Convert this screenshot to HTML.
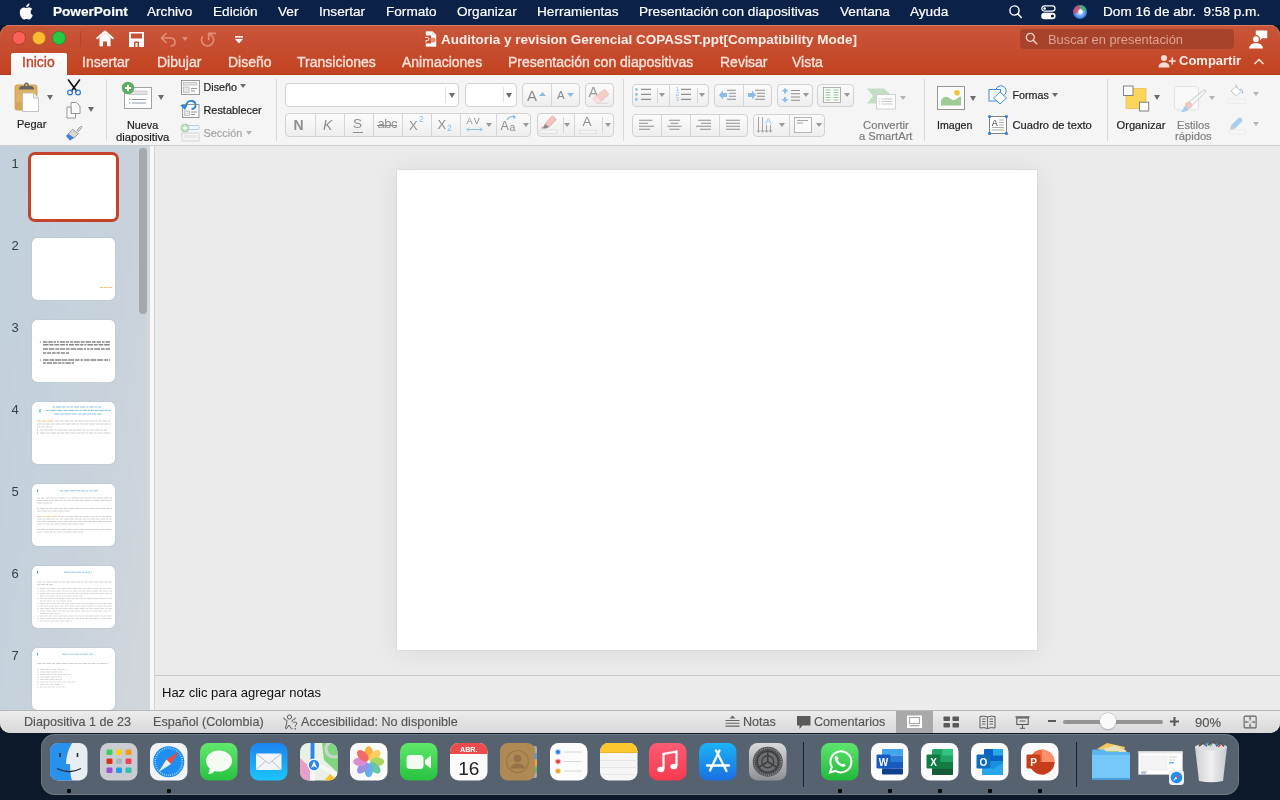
<!DOCTYPE html>
<html><head><meta charset="utf-8">
<style>
*{margin:0;padding:0;box-sizing:border-box}
html,body{width:1280px;height:800px;overflow:hidden;background:#0c192b;font-family:"Liberation Sans",sans-serif}
.a{position:absolute}
svg{position:absolute;overflow:visible}
.t{position:absolute;white-space:nowrap;line-height:1}
.m{color:#fff;font-size:13.6px;top:4.8px;-webkit-text-stroke:.2px #fff}
.tab{color:#f7e1da;font-size:14px;top:55.3px;-webkit-text-stroke:.35px currentColor}
.rl{font-size:11px;color:#1e1e1e;-webkit-text-stroke:.2px currentColor}
.g{color:#9a9a9a}
.sep{position:absolute;width:1px;background:#d9d9d9;top:79px;height:62px}
.dd{position:absolute;width:0;height:0;border-left:3.5px solid transparent;border-right:3.5px solid transparent;border-top:5px solid #6b6b6b}
.ddg{border-top-color:#b5b5b5}
.box{position:absolute;background:linear-gradient(#fbfbfb,#eeeeee);border:1px solid #d2d2d2;border-radius:4px}
.vd{position:absolute;top:0;bottom:0;width:1px;background:#d6d6d6}
.num{position:absolute;left:11.5px;font-size:13px;color:#3a3f47;line-height:1}
.thumb{position:absolute;left:32px;width:83px;height:62px;background:#fff;border-radius:5px;box-shadow:0 0 1px rgba(0,0,0,.3)}
.st{font-size:12.6px;color:#555;top:716px;-webkit-text-stroke:.15px currentColor}
.icon{position:absolute;top:743px;width:38px;height:38px;border-radius:9px;overflow:hidden}
.dot{position:absolute;top:789px;width:4px;height:4px;background:#0a0a0a;border-radius:1px}
#root{position:absolute;left:0;top:0;width:1280px;height:800px;will-change:transform}</style></head><body><div id="root">

<!-- MENU BAR -->
<div class="a" style="left:0;top:0;width:1280px;height:25px;background:#0b2147"></div>
<svg style="left:19px;top:3px" width="14" height="17" viewBox="0 0 14 17"><path fill="#fff" d="M11.6 9c0-2 1.6-2.9 1.700-3-1-1.4-2.400-1.600-2.900-1.600-1.200-.1-2.400.7-3 .7-.6 0-1.600-.7-2.600-.7C3.500 4.500 2.200 5.300 1.500 6.500c-1.400 2.500-.4 6.100 1 8.100.7 1 1.500 2.100 2.500 2 1 0 1.400-.7 2.600-.7s1.500.7 2.600.6c1.100 0 1.700-1 2.400-2 .8-1.100 1.100-2.200 1.100-2.300 0 0-2.100-.8-2.100-3.200zM9.700 3.100c.5-.7.900-1.600.8-2.600-.8 0-1.800.5-2.400 1.200-.5.600-1 1.500-.8 2.500.9.1 1.800-.4 2.400-1.100z"/></svg>
<div class="t m" style="left:53px;font-weight:700">PowerPoint</div>
<div class="t m" style="left:147px">Archivo</div>
<div class="t m" style="left:213px">Edición</div>
<div class="t m" style="left:278px">Ver</div>
<div class="t m" style="left:319px">Insertar</div>
<div class="t m" style="left:386px">Formato</div>
<div class="t m" style="left:457px">Organizar</div>
<div class="t m" style="left:537px">Herramientas</div>
<div class="t m" style="left:639px">Presentación con diapositivas</div>
<div class="t m" style="left:840px">Ventana</div>
<div class="t m" style="left:910px">Ayuda</div>
<div class="t m" style="left:1103px">Dom 16 de abr.&nbsp; 9:58 p.m.</div>

<!-- WINDOW -->
<div class="a" id="winbg" style="left:0;top:25px;width:1280px;height:708px;border-radius:10px;background:#ebebeb;overflow:hidden">
  <div class="a" style="left:0;top:0;width:1280px;height:50px;background:linear-gradient(#c9563a,#c64c2e 50%,#c2431f);border-bottom:1px solid #b93c1c"></div>
  <div class="a" style="left:0;top:0;width:1280px;height:1px;background:#dc7a5e"></div>
  <div class="a" style="left:0;top:50px;width:1280px;height:71px;background:#f5f5f5;border-bottom:1px solid #cdcdcd"></div>
  <div class="a" style="left:0;top:121px;width:150px;height:564px;background:linear-gradient(100deg,#c2d1dd 0%,#c7d2dc 55%,#cdd4db 78%,#d2d7dc 100%)"></div>
  <div class="a" style="left:150px;top:121px;width:5px;height:564px;background:#f8f8f8;border-right:1px solid #d3d3d3"></div>
  <div class="a" style="left:155px;top:650px;width:1125px;height:35px;background:#ececec;border-top:1px solid #cacaca"></div>
  <div class="a" style="left:0;top:685px;width:1280px;height:23px;background:linear-gradient(#ededed,#d8d8d8);border-top:1px solid #b8b8b8"></div>
</div>

<!-- TITLE BAR -->
<div class="a" style="left:12.25px;top:31.25px;width:13.5px;height:13.5px;border-radius:50%;background:#fe5f57;border:.9px solid #a9402f"></div>
<div class="a" style="left:32.25px;top:31.25px;width:13.5px;height:13.5px;border-radius:50%;background:#febc2e;border:.9px solid #b5702a"></div>
<div class="a" style="left:52.25px;top:31.25px;width:13.5px;height:13.5px;border-radius:50%;background:#28c840;border:.9px solid #2f8a35"></div>
<div class="a" style="left:80px;top:31px;width:1px;height:16px;background:#b8452a"></div>
<div class="t" style="left:441px;top:33px;font-size:13.5px;font-weight:700;color:#fbeee9">Auditoria y revision Gerencial COPASST.ppt[Compatibility Mode]</div>
<div class="a" style="left:11px;top:52.5px;width:55.5px;height:22.5px;background:linear-gradient(#ffffff,#f5f5f5);border-radius:2px 2px 0 0"></div>
<div class="t tab" style="left:22px;color:#c0432a">Inicio</div>
<div class="t tab" style="left:82px">Insertar</div>
<div class="t tab" style="left:157px">Dibujar</div>
<div class="t tab" style="left:228px">Diseño</div>
<div class="t tab" style="left:297px">Transiciones</div>
<div class="t tab" style="left:402px">Animaciones</div>
<div class="t tab" style="left:508px">Presentación con diapositivas</div>
<div class="t tab" style="left:720px">Revisar</div>
<div class="t tab" style="left:792px">Vista</div>
<div class="a" style="left:1020px;top:29px;width:214px;height:20px;background:#a8432b;border-radius:4px"></div>
<div class="t" style="left:1048px;top:34px;font-size:12.85px;color:#dfa393">Buscar en presentación</div>
<div class="t" style="left:1179px;top:54px;font-size:13px;font-weight:700;color:#fbeee9">Compartir</div>

<!-- menubar right icons -->
<svg style="left:1008px;top:4px" width="16" height="16" viewBox="0 0 16 16">
  <circle cx="6.5" cy="6.5" r="4.6" fill="none" stroke="#fff" stroke-width="1.4"/>
  <path d="M10 10 L13.3 13.5" stroke="#fff" stroke-width="1.6" stroke-linecap="round"/>
</svg>
<svg style="left:1041px;top:5px" width="15" height="15" viewBox="0 0 15 15">
  <rect x=".8" y=".8" width="13.2" height="5.4" rx="2.7" fill="none" stroke="#fff" stroke-width="1.2"/>
  <circle cx="3.6" cy="3.5" r="1.3" fill="#fff"/>
  <rect x=".2" y="7.8" width="14.4" height="6.4" rx="3.2" fill="#fff"/>
  <circle cx="11.4" cy="11" r="1.6" fill="#0b1f45"/>
</svg>
<svg style="left:1073px;top:5px" width="14" height="14" viewBox="0 0 14 14">
  <defs><radialGradient id="sg" cx="50%" cy="50%" r="50%"><stop offset="0" stop-color="#fff"/><stop offset=".35" stop-color="#9fc8ff"/><stop offset="1" stop-color="#2b6fd0"/></radialGradient></defs>
  <circle cx="7" cy="7" r="7" fill="url(#sg)"/>
  <path d="M7 0 A7 7 0 0 0 0.5 9 L7 7Z" fill="#e0445e" opacity=".8"/>
  <path d="M7 0 A7 7 0 0 1 13.5 5 L7 7Z" fill="#38b36b" opacity=".8"/>
  <circle cx="7.5" cy="6.5" r="2.2" fill="#fff"/>
</svg>

<!-- title bar left icons -->
<svg style="left:96px;top:30px" width="18" height="17" viewBox="0 0 18 17">
  <path d="M1.2 8.2 L9 1.5 L16.8 8.2" fill="none" stroke="#fff" stroke-width="2" stroke-linejoin="round" stroke-linecap="round"/>
  <path d="M3.5 7.5 L3.5 16.2 L7 16.2 L7 11.5 L11 11.5 L11 16.2 L14.5 16.2 L14.5 7.5 L9 3 Z" fill="#fff"/>
</svg>
<svg style="left:128.5px;top:31.5px" width="15" height="15" viewBox="0 0 15 15">
  <path d="M0 0 H15 V15 H0Z M2 1.5 V6.5 H13 V1.5Z M5 15 V10.5 Q5 9.5 6 9.5 H9 Q10 9.5 10 10.5 V15 H8.5 V11 H6.5 V15Z" fill="#fff" fill-rule="evenodd"/>
</svg>
<svg style="left:159.5px;top:31.5px" width="17" height="15" viewBox="0 0 17 15">
  <path d="M6 1.5 L1.5 6 L6 10.5" fill="none" stroke="#e0907a" stroke-width="1.6" stroke-linecap="round" stroke-linejoin="round"/>
  <path d="M2 6 H10 Q15 6 15 10.2 Q15 14 11 14" fill="none" stroke="#e0907a" stroke-width="1.6" stroke-linecap="round"/>
</svg>
<svg style="left:182px;top:37px" width="6" height="4"><path d="M0 0 H6 L3 4Z" fill="#de8d77"/></svg>
<svg style="left:199.5px;top:31.5px" width="17" height="17" viewBox="0 0 17 17">
  <path d="M2.3 4.9 A6 6 0 1 0 12.3 4.2 L9.2 1.6" fill="none" stroke="#e0907a" stroke-width="1.7" stroke-linecap="round" stroke-linejoin="round"/>
  <path d="M8.7 7.4 V1.3 H15" fill="none" stroke="#e0907a" stroke-width="1.7" stroke-linecap="square"/>
</svg>
<svg style="left:235px;top:35.5px" width="8" height="8" viewBox="0 0 8 8">
  <rect x="0" y="0" width="8" height="1.6" fill="#fff"/>
  <path d="M0 3 H8 L4 7.5Z" fill="#fff"/>
</svg>
<!-- doc icon -->
<svg style="left:422px;top:31px" width="15" height="16" viewBox="0 0 15 16">
  <path d="M4 .5 H10.5 L14 4 V15.5 H4Z" fill="#fff" stroke="#d9d9d9" stroke-width=".6"/>
  <path d="M10.5 .5 V4 H14" fill="#eee" stroke="#ccc" stroke-width=".6"/>
  <rect x=".5" y="4.5" width="8.5" height="8" fill="#d04a2a"/>
  <path d="M3 6.5 h2.5 q1.5 0 1.5 1.5 q0 1.5 -1.5 1.5 h-1.5 v2" fill="none" stroke="#fff" stroke-width="1"/>
  <circle cx="11" cy="9" r="2.5" fill="#ec8b6c"/>
</svg>
<!-- search box icon -->
<svg style="left:1025px;top:32px" width="13" height="13" viewBox="0 0 13 13">
  <circle cx="5.3" cy="5.3" r="4" fill="none" stroke="#f3d6cd" stroke-width="1.2"/>
  <path d="M8.2 8.2 L11.8 11.8" stroke="#f3d6cd" stroke-width="1.4" stroke-linecap="round"/>
</svg>
<!-- person chat -->
<svg style="left:1248px;top:29.5px" width="20" height="19" viewBox="0 0 20 19">
  <path d="M7.8 .5 H19.2 V8.2 H14.2 L11.8 10.6 L11.6 8.2 H7.8Z" fill="#fff"/>
  <circle cx="8" cy="9.2" r="3.6" fill="#fff" stroke="#c9512f" stroke-width="1.4"/>
  <path d="M1 18.6 Q1.5 13.2 8 13 Q14.5 13.2 15 18.6Z" fill="#fff"/>
</svg>
<!-- person plus + chevron -->
<svg style="left:1157.5px;top:54px" width="19" height="14" viewBox="0 0 19 14">
  <circle cx="6" cy="4" r="3" fill="#f7dcd3"/>
  <path d="M.5 13.5 Q.5 8.5 6 8.3 Q11.5 8.5 11.5 13.5Z" fill="#f7dcd3"/>
  <path d="M14.3 3.5 V10.5 M10.8 7 H17.8" stroke="#f7dcd3" stroke-width="1.7"/>
</svg>
<svg style="left:1253.5px;top:57.5px" width="10" height="7" viewBox="0 0 10 7">
  <path d="M1 5.5 L5 1.5 L9 5.5" fill="none" stroke="#f7dcd3" stroke-width="1.7" stroke-linecap="round" stroke-linejoin="round"/>
</svg>

<!-- RIBBON -->
<!-- clipboard group -->
<svg style="left:14px;top:81px" width="26" height="32" viewBox="0 0 26 32">
  <rect x="1" y="4" width="22" height="25" rx="2" fill="#e2b062" stroke="#c99846" stroke-width=".8"/>
  <rect x="1.4" y="21" width="21.2" height="7.6" fill="#d6a656"/>
  <path d="M5 8.5 Q5 5 8 5 L10 5 Q10 1.5 12.5 1.5 Q15 1.5 15 5 L17 5 Q20 5 20 8.5 Z" fill="#666"/>
  <circle cx="12.5" cy="4" r="1.2" fill="#e2b062"/>
  <path d="M8.5 12 L19.5 12 L24.5 17 L24.5 30.5 L8.5 30.5 Z" fill="#fff" stroke="#b5b5b5" stroke-width=".8"/>
  <path d="M19.5 12 L19.5 17 L24.5 17" fill="#eee" stroke="#b5b5b5" stroke-width=".8"/>
</svg>
<div class="dd" style="left:47px;top:95px"></div>
<div class="t rl" style="left:17px;top:119px">Pegar</div>
<svg style="left:66px;top:79px" width="16" height="17" viewBox="0 0 16 17">
  <path d="M2.5 1 L10.5 12 M13.5 1 L5.5 12" stroke="#111" stroke-width="1.6" fill="none" stroke-linecap="round"/>
  <circle cx="4" cy="13.5" r="2.4" fill="none" stroke="#2f7fdc" stroke-width="1.3"/>
  <circle cx="12" cy="13.5" r="2.4" fill="none" stroke="#2f7fdc" stroke-width="1.3"/>
</svg>
<svg style="left:66px;top:102px" width="15" height="17" viewBox="0 0 15 17">
  <path d="M5 .5 L10.5 .5 L14 4 L14 11.5 L5 11.5 Z" fill="#fff" stroke="#8a8a8a" stroke-width=".9"/>
  <path d="M1 5 L5 5 L5 11.5 L9.5 11.5 L9.5 16 L1 16 Z" fill="#fff" stroke="#8a8a8a" stroke-width=".9"/>
</svg>
<div class="dd" style="left:88px;top:107px"></div>
<svg style="left:65px;top:125px" width="18" height="16" viewBox="0 0 18 16">
  <path d="M12 5 L15.5 1.5 Q17 1 16.8 2.5 L13.5 6.5 Z" fill="#ddd" stroke="#888" stroke-width=".8"/>
  <path d="M7.5 4.5 L13.5 8.5 L9 13 L3 9 Z" fill="#d9d9d9" stroke="#8a8a8a" stroke-width=".8"/>
  <path d="M3 9 L9 13 L5 15.5 L1 11 Z" fill="#3d7fd6"/>
</svg>
<div class="sep" style="left:106px"></div>

<!-- slides group -->
<svg style="left:120px;top:81px" width="34" height="29" viewBox="0 0 34 29">
  <rect x="4.5" y="6.5" width="27" height="21" fill="#fff" stroke="#9a9a9a" stroke-width=".9"/>
  <rect x="9" y="10" width="18" height="3.5" fill="#e4e4e4" stroke="#b0b0b0" stroke-width=".6"/>
  <path d="M9 18.5h1.5M12 18.5h14M9 22h1.5M12 22h14" stroke="#7d8fa5" stroke-width=".9"/>
  <circle cx="8" cy="7" r="6.2" fill="#5aab5e"/>
  <path d="M8 3.8v6.4M4.8 7h6.4" stroke="#fff" stroke-width="2"/>
</svg>
<div class="dd" style="left:158px;top:95px"></div>
<div class="t rl" style="left:127px;top:119.5px;font-size:10.8px">Nueva</div>
<div class="t rl" style="left:116px;top:131.5px;font-size:11.3px">diapositiva</div>
<svg style="left:181px;top:80px" width="19" height="15" viewBox="0 0 19 15">
  <rect x=".5" y=".5" width="18" height="14" fill="#fafafa" stroke="#8e8e8e" stroke-width=".9"/>
  <rect x="2.5" y="2.5" width="13" height="2.5" fill="#e6e6e6" stroke="#aaa" stroke-width=".6"/>
  <rect x="2.5" y="7" width="5.5" height="5.5" fill="#e6e6e6" stroke="#aaa" stroke-width=".6"/>
  <path d="M10 8.5h6M10 11h4" stroke="#8e8e8e" stroke-width=".9"/>
</svg>
<div class="t rl" style="left:203.5px;top:82px;font-size:10.75px">Diseño</div>
<div class="dd" style="left:240px;top:84px;border-left-width:3px;border-right-width:3px;border-top-width:4px"></div>
<svg style="left:180px;top:100px" width="20" height="18" viewBox="0 0 20 18">
  <rect x="2.5" y="4.5" width="16.5" height="13" fill="#fafafa" stroke="#8e8e8e" stroke-width=".9"/>
  <rect x="4.5" y="11" width="5" height="4.5" fill="#e6e6e6" stroke="#aaa" stroke-width=".6"/>
  <path d="M11 12h6M11 14.5h4" stroke="#8e8e8e" stroke-width=".9"/>
  <path d="M6 6 Q7 .5 12 1 Q16 1.5 15.5 6 Q15 9 11.5 9" fill="none" stroke="#2f86dc" stroke-width="1.8"/>
  <path d="M0 5 L7.5 5 L5 10 Z" fill="#2f86dc"/>
</svg>
<div class="t rl" style="left:203.5px;top:104.5px;font-size:10.9px">Restablecer</div>
<svg style="left:180px;top:123px" width="20" height="19" viewBox="0 0 20 19">
  <rect x="7" y="2.5" width="12" height="4" rx="1" fill="none" stroke="#a9c8ea" stroke-width=".9"/>
  <rect x="2" y="10" width="17" height="8" fill="#f5f5f5" stroke="#d2d2d2" stroke-width=".9"/>
  <rect x="4" y="12" width="13" height="3" fill="#e8e8e8"/>
  <circle cx="5" cy="5" r="4.5" fill="#b6d8b8"/>
  <path d="M5 2.5v5M2.5 5h5" stroke="#fff" stroke-width="1.3"/>
</svg>
<div class="t rl g" style="left:203.5px;top:127.5px;font-size:10.9px;color:#a4a4a4">Sección</div>
<div class="dd ddg" style="left:246px;top:131px;border-left-width:3px;border-right-width:3px;border-top-width:4px"></div>
<div class="sep" style="left:276px"></div>
<!-- font group -->
<div class="box" style="left:285px;top:83px;width:174px;height:24px;background:#fff"><div class="vd" style="left:159px;top:3px;bottom:3px;background:#e2e2e2"></div></div>
<div class="dd" style="left:449px;top:93px"></div>
<div class="box" style="left:464.5px;top:83px;width:52px;height:24px;background:#fff"><div class="vd" style="left:37px;top:3px;bottom:3px;background:#e2e2e2"></div></div>
<div class="dd" style="left:506px;top:93px"></div>
<div class="box" style="left:521.5px;top:83px;width:58px;height:24px"><div class="vd" style="left:28.5px"></div></div>
<div class="t" style="left:527px;top:87.5px;font-size:15px;color:#8c8c8c">A</div>
<svg style="left:539px;top:92px" width="7" height="4"><path d="M0 4 L3.5 0 L7 4Z" fill="#8cbde9"/></svg>
<div class="t" style="left:557px;top:89.5px;font-size:11.5px;color:#8c8c8c">A</div>
<svg style="left:567px;top:92.5px" width="7" height="4"><path d="M0 0 L3.5 4 L7 0Z" fill="#8cbde9"/></svg>
<div class="box" style="left:584.5px;top:83px;width:29px;height:24px"></div>
<div class="t" style="left:588.5px;top:84.5px;font-size:14.5px;color:#9a9a9a">A</div>
<svg style="left:592px;top:88px" width="18" height="17" viewBox="0 0 18 17">
  <path d="M5 15.3 H16.5" stroke="#cfcfcf" stroke-width=".8"/>
  <g transform="rotate(-38 9 8.5)">
    <rect x="1.5" y="5" width="15" height="7" rx="1.2" fill="#f4cdc9" stroke="#e6a5a0" stroke-width=".7" stroke-dasharray="1 .6"/>
    <rect x="1.5" y="5" width="4.5" height="7" rx="1" fill="#f9e0de"/>
  </g>
</svg>

<div class="box" style="left:285px;top:113px;width:246px;height:24px">
  <div class="vd" style="left:29px"></div><div class="vd" style="left:58px"></div><div class="vd" style="left:87px"></div><div class="vd" style="left:116px"></div><div class="vd" style="left:145px"></div><div class="vd" style="left:174px"></div><div class="vd" style="left:210px"></div>
</div>
<div class="t" style="left:293.5px;top:117.5px;font-size:14px;font-weight:700;color:#8e8e8e">N</div>
<div class="t" style="left:323px;top:117.5px;font-size:14px;font-style:italic;color:#8e8e8e">K</div>
<div class="t" style="left:353px;top:117px;font-size:13.5px;color:#8e8e8e">S</div>
<div class="a" style="left:353px;top:132px;width:10px;height:1px;background:#8e8e8e"></div>
<div class="t" style="left:377.5px;top:117px;font-size:13px;color:#8e8e8e;letter-spacing:-.5px">abc</div>
<div class="a" style="left:377px;top:125px;width:20px;height:1px;background:#8e8e8e"></div>
<div class="t" style="left:409px;top:119px;font-size:13px;color:#8e8e8e">X</div>
<div class="t" style="left:419px;top:115px;font-size:8.5px;color:#8cbde9">2</div>
<div class="t" style="left:437.5px;top:117.5px;font-size:13px;color:#8e8e8e">X</div>
<div class="t" style="left:447px;top:124px;font-size:8.5px;color:#8cbde9">2</div>
<div class="t" style="left:466.5px;top:117px;font-size:9px;color:#8e8e8e;letter-spacing:2px">AV</div>
<svg style="left:466px;top:127px" width="17" height="5" viewBox="0 0 17 5"><path d="M1 2.5h15M3 .5L1 2.5 3 4.5M14 .5l2 2-2 2" stroke="#8cbde9" stroke-width="1" fill="none"/></svg>
<div class="dd" style="left:485.5px;top:122.5px;border-left-width:3px;border-right-width:3px;border-top-width:4px;border-top-color:#9a9a9a"></div>
<div class="t" style="left:500.5px;top:119.5px;font-size:12.5px;color:#8e8e8e">A</div>
<div class="t" style="left:509.5px;top:121.5px;font-size:10.5px;color:#8e8e8e">a</div>
<svg style="left:506px;top:115px" width="11" height="6" viewBox="0 0 11 6"><path d="M1 5 Q3 1 8 1.5" stroke="#8cbde9" stroke-width="1.3" fill="none"/><path d="M7 0 L10.5 2 L7 4Z" fill="#8cbde9"/></svg>
<div class="dd" style="left:522.5px;top:122.5px;border-left-width:3px;border-right-width:3px;border-top-width:4px;border-top-color:#9a9a9a"></div>

<div class="box" style="left:536.5px;top:113px;width:77px;height:24px">
  <div class="vd" style="left:36px"></div>
  <div class="vd" style="left:25px;top:3px;bottom:3px"></div>
  <div class="vd" style="left:64px;top:3px;bottom:3px"></div>
</div>
<svg style="left:540px;top:115px" width="17" height="19" viewBox="0 0 17 19"><path d="M5 9 L11.5 1.5 Q12.5 .5 13.5 1.5 L15.5 3.5 Q16.5 4.5 15.5 5.5 L9 12 Z" fill="#f3c3c0" stroke="#e0a3a0" stroke-width=".7"/><path d="M5 9 L9 12 L6 13.5 L2.5 13.5Z" fill="#8a8a8a"/><path d="M1.5 13.5 L3 12" stroke="#f0a090" stroke-width="1.2"/><rect x="0" y="15" width="17" height="3.5" fill="#f5f5f5" stroke="#d6d6d6" stroke-width=".6"/></svg>
<div class="dd" style="left:564px;top:122.5px;border-left-width:3px;border-right-width:3px;border-top-width:4px;border-top-color:#9a9a9a"></div>
<div class="t" style="left:582.5px;top:115.3px;font-size:13.5px;color:#8e8e8e">A</div>
<svg style="left:579px;top:129.5px" width="18" height="4" viewBox="0 0 18 4"><rect x=".3" y=".3" width="17.4" height="3.4" fill="#f5f5f5" stroke="#d6d6d6" stroke-width=".6"/></svg>
<div class="dd" style="left:604.5px;top:122.5px;border-left-width:3px;border-right-width:3px;border-top-width:4px;border-top-color:#9a9a9a"></div>
<div class="sep" style="left:622.5px"></div>
<!-- paragraph group -->
<div class="box" style="left:631.5px;top:83.5px;width:77px;height:23px">
  <div class="vd" style="left:36.5px"></div>
  <div class="vd" style="left:24.5px;top:3px;bottom:3px"></div>
  <div class="vd" style="left:64.5px;top:3px;bottom:3px"></div>
</div>
<svg style="left:634px;top:87px" width="20" height="15" viewBox="0 0 20 15">
  <circle cx="2.4" cy="2.4" r="1.3" fill="#8cbde9"/><circle cx="2.4" cy="7.4" r="1.3" fill="#8cbde9"/><circle cx="2.4" cy="12.4" r="1.3" fill="#8cbde9"/>
  <path d="M7 2.4h10M7 7.4h10M7 12.4h10" stroke="#8e8e8e" stroke-width="1.1"/>
</svg>
<div class="dd" style="left:659px;top:93px;border-left-width:3px;border-right-width:3px;border-top-width:4px;border-top-color:#9a9a9a"></div>
<svg style="left:674px;top:86px" width="7" height="16" viewBox="0 0 7 16"><g font-family="Liberation Sans" font-size="6" fill="#8cbde9" text-anchor="middle"><text x="3.5" y="5.3">1</text><text x="3.5" y="10.3">2</text><text x="3.5" y="15.3">3</text></g></svg>
<svg style="left:680px;top:87px" width="12" height="15" viewBox="0 0 12 15"><path d="M1 2.4h10M1 7.4h10M1 12.4h10" stroke="#8e8e8e" stroke-width="1.1"/></svg>
<div class="dd" style="left:699px;top:93px;border-left-width:3px;border-right-width:3px;border-top-width:4px;border-top-color:#9a9a9a"></div>

<div class="box" style="left:713.5px;top:83.5px;width:58px;height:23px"><div class="vd" style="left:28.5px"></div></div>
<svg style="left:718px;top:89px" width="19" height="12" viewBox="0 0 19 12">
  <path d="M1 6 L5 1.5 L5 4 L9 4 L9 8 L5 8 L5 10.5Z" fill="#8cbde9"/>
  <path d="M9 1.3h9M11 4.3h7M11 7.3h7M9 10.3h9" stroke="#8e8e8e" stroke-width="1.1"/>
</svg>
<svg style="left:747px;top:89px" width="19" height="12" viewBox="0 0 19 12">
  <path d="M9 6 L5 1.5 L5 4 L1 4 L1 8 L5 8 L5 10.5Z" fill="#8cbde9"/>
  <path d="M8 1.3h10M10 4.3h8M10 7.3h8M8 10.3h10" stroke="#8e8e8e" stroke-width="1.1"/>
</svg>

<div class="box" style="left:776.5px;top:83.5px;width:36px;height:23px"></div>
<svg style="left:781px;top:87.5px" width="20" height="15" viewBox="0 0 20 15">
  <path d="M4 0 L7.5 3.5 L5 3.5 L5 5.5 L3 5.5 L3 3.5 L.5 3.5Z" fill="#8cbde9"/>
  <path d="M4 14.5 L7.5 11 L5 11 L5 9 L3 9 L3 11 L.5 11Z" fill="#8cbde9"/>
  
  <path d="M10 2.5h9M10 5.8h9M10 9h9M10 12.2h9" stroke="#8e8e8e" stroke-width="1.1"/>
</svg>
<div class="dd" style="left:803px;top:93px;border-left-width:3px;border-right-width:3px;border-top-width:4px;border-top-color:#9a9a9a"></div>

<div class="box" style="left:817px;top:83.5px;width:36.5px;height:23px"></div>
<svg style="left:823px;top:87px" width="18" height="16" viewBox="0 0 18 16">
  <rect x=".5" y=".5" width="17" height="15" fill="#fafafa" stroke="#a0a0a0" stroke-width=".8"/>
  <path d="M2.5 3h5M10.5 3h5M2.5 5.5h5M10.5 5.5h5M2.5 8h5M10.5 8h5M2.5 10.5h5M10.5 10.5h5M2.5 13h5M10.5 13h5" stroke="#8dc38b" stroke-width=".9"/>
</svg>
<div class="dd" style="left:844px;top:93px;border-left-width:3px;border-right-width:3px;border-top-width:4px;border-top-color:#9a9a9a"></div>

<div class="box" style="left:631.5px;top:113.5px;width:116.5px;height:23px">
  <div class="vd" style="left:28.5px"></div><div class="vd" style="left:57.5px"></div><div class="vd" style="left:86.5px"></div>
</div>
<svg style="left:638px;top:119px" width="104" height="12" viewBox="0 0 104 12">
  <path d="M1 1.3h13.5M1 4.3h9M1 7.3h15M1 10.3h11" stroke="#8e8e8e" stroke-width="1.1"/>
  <path d="M31 1.3h11M32.5 4.3h8M29.5 7.3h14M31.5 10.3h10" stroke="#8e8e8e" stroke-width="1.1"/>
  <path d="M60 1.3h13M63 4.3h10M58 7.3h15M62 10.3h11" stroke="#8e8e8e" stroke-width="1.1"/>
  <path d="M88 1.3h14M88 4.3h14M88 7.3h14M88 10.3h14" stroke="#8e8e8e" stroke-width="1.1"/>
</svg>

<div class="box" style="left:752.5px;top:113.5px;width:72px;height:23px"><div class="vd" style="left:35.5px"></div></div>
<svg style="left:757px;top:116px" width="20" height="18" viewBox="0 0 20 18">
  <path d="M1.5 1v15M5.5 1v15M9.5 9v7M13.5 9v7" stroke="#9a9a9a" stroke-width=".9"/>
  <path d="M0 14.3l1.5 2 1.5-2M4 14.3l1.5 2 1.5-2M8 14.3l1.5 2 1.5-2M12 14.3l1.5 2 1.5-2" stroke="#9a9a9a" stroke-width=".9" fill="none"/>
  <text x="11.5" y="8" text-anchor="middle" font-family="Liberation Sans" font-size="9.5" fill="#8cbde9">A</text>
</svg>
<div class="dd" style="left:778.5px;top:122.5px;border-left-width:3px;border-right-width:3px;border-top-width:4px;border-top-color:#9a9a9a"></div>
<svg style="left:794px;top:117px" width="18" height="16" viewBox="0 0 18 16">
  <rect x=".5" y=".5" width="17" height="15" fill="#fafafa" stroke="#a5a5a5" stroke-width=".8"/>
  <path d="M3 3.5h11M3 6h6" stroke="#9a9a9a" stroke-width=".9"/>
</svg>
<div class="dd" style="left:815.5px;top:122.5px;border-left-width:3px;border-right-width:3px;border-top-width:4px;border-top-color:#9a9a9a"></div>

<svg style="left:866px;top:87.5px" width="31" height="22" viewBox="0 0 31 22">
  <path d="M1 .5 L18 .5 L26 8 L18 15.5 L1 15.5 L7 8Z" fill="#c3dfc3"/>
  <rect x="10.5" y="6.5" width="19" height="14.5" fill="#fdfdfd" stroke="#c8c8c8" stroke-width=".8"/>
  <path d="M13 11h1M15.5 11h11M13 13.5h1M15.5 13.5h11M13 16h1M15.5 16h11" stroke="#bdbdbd" stroke-width=".8"/>
</svg>
<div class="dd ddg" style="left:900px;top:96px;border-left-width:3px;border-right-width:3px;border-top-width:4px"></div>
<div class="t rl" style="left:863px;top:119.5px;font-size:11.3px;color:#7d7d7d">Convertir</div>
<div class="t rl" style="left:859px;top:131px;font-size:11.2px;color:#7d7d7d">a SmartArt</div>
<div class="sep" style="left:923.5px"></div>
<!-- insert group -->
<svg style="left:937px;top:86px" width="28" height="24" viewBox="0 0 28 24">
  <rect x=".5" y=".5" width="27" height="23" fill="#fbfbfb" stroke="#8a8a8a" stroke-width=".9"/>
  <circle cx="20" cy="6.8" r="2.8" fill="#f2c338"/>
  <path d="M4 19.5 L4 14 Q8 8.5 13 12.5 Q17 15.5 19.5 13 Q22 10.5 24 10.5 L24 19.5Z" fill="#9fca93"/>
</svg>
<div class="dd" style="left:969.5px;top:95.5px"></div>
<div class="t rl" style="left:937px;top:119.5px;font-size:10.6px">Imagen</div>
<svg style="left:988px;top:85px" width="21" height="20" viewBox="0 0 21 20">
  <circle cx="13" cy="6" r="5.2" fill="#fff" stroke="#3b8ee0" stroke-width="1"/>
  <rect x="1" y="4.5" width="11.5" height="11.5" fill="#fff" stroke="#3b8ee0" stroke-width="1"/>
  <path d="M12 7 L18.5 13 L12 19 L5.5 13Z" fill="#fff" stroke="#3b8ee0" stroke-width="1"/>
</svg>
<div class="t rl" style="left:1012.5px;top:90px;font-size:10.7px">Formas</div>
<div class="dd" style="left:1052px;top:92.5px;border-left-width:3px;border-right-width:3px;border-top-width:4px"></div>
<svg style="left:987.5px;top:114.5px" width="21" height="20" viewBox="0 0 21 20">
  <rect x="1.5" y="1.5" width="17" height="17" fill="#fff" stroke="#777" stroke-width=".9"/>
  <text x="3.8" y="11" font-family="Liberation Sans" font-size="9" fill="#333">A</text>
  <path d="M11 5h5M11 7.5h5M11 10h5M4 12.5h12M4 15h12" stroke="#9a9a9a" stroke-width=".8"/>
  <circle cx="1.6" cy="1.6" r="1.6" fill="#3b7cd0"/><circle cx="18.4" cy="1.6" r="1.6" fill="#3b7cd0"/>
  <circle cx="1.6" cy="18.4" r="1.6" fill="#3b7cd0"/><circle cx="18.4" cy="18.4" r="1.6" fill="#3b7cd0"/>
</svg>
<div class="t rl" style="left:1012.5px;top:119.5px;font-size:11.15px">Cuadro de texto</div>
<div class="sep" style="left:1106.5px"></div>

<!-- drawing group -->
<svg style="left:1122px;top:84.5px" width="28" height="27" viewBox="0 0 28 27">
  <rect x="4" y="3.5" width="20" height="20" fill="#fcd55a" stroke="#e0b53a" stroke-width=".6"/>
  <rect x="1.5" y="1" width="9.5" height="9.5" fill="#fff" stroke="#777" stroke-width=".9"/>
  <rect x="17.5" y="17.2" width="9.2" height="8.8" fill="#fff" stroke="#777" stroke-width=".9"/>
</svg>
<div class="dd" style="left:1154px;top:95px"></div>
<div class="t rl" style="left:1116.5px;top:119.5px;font-size:11.15px;color:#222">Organizar</div>
<svg style="left:1173px;top:85px" width="35" height="28" viewBox="0 0 35 28">
  <rect x="1.5" y="1.5" width="24" height="23.5" rx="3" fill="#f9f9f9" stroke="#dedede" stroke-width=".9"/>
  <path d="M31 5 Q33.5 4.5 32.5 7 L18 21.5 L14.5 18 Z" fill="#f7f7f7" stroke="#c2c2c2" stroke-width=".9"/>
  <circle cx="15.5" cy="20.3" r="3.6" fill="#f0c6be"/>
  <path d="M12.5 21 Q16 24 15 25.5 Q11 27.5 8 27 Q10 25 11 22Z" fill="#a9cdee"/>
</svg>
<div class="dd ddg" style="left:1208.5px;top:95.5px;border-left-width:3px;border-right-width:3px;border-top-width:4px"></div>
<div class="t rl" style="left:1177px;top:119.5px;font-size:11.1px;color:#7f7f7f">Estilos</div>
<div class="t rl" style="left:1175px;top:131px;font-size:11.2px;color:#7f7f7f">rápidos</div>
<svg style="left:1228px;top:84px" width="18" height="20" viewBox="0 0 18 20">
  <path d="M3 7 L8 2.5 L13 7.5 L8.5 12 Z" fill="#fff" stroke="#b8b8b8" stroke-width=".8"/>
  <path d="M7 .5 Q9 0 9 4" stroke="#b8b8b8" stroke-width=".8" fill="none"/>
  <path d="M12 5 Q15 6 14.5 9.5" stroke="#9fc6ee" stroke-width="1.3" fill="none"/>
  <rect x=".3" y="15.3" width="17.4" height="4" rx=".8" fill="#f7f7f7" stroke="#e0e0e0" stroke-width=".6"/>
</svg>
<div class="dd ddg" style="left:1252.5px;top:92px;border-left-width:3px;border-right-width:3px;border-top-width:4px"></div>
<svg style="left:1228px;top:115.5px" width="18" height="18" viewBox="0 0 18 18">
  <path d="M3 9.5 L10.5 2 Q12 1 13 2 L14 3 Q15 4 14 5.5 L6.5 13 Z" fill="#a9cdee"/>
  <path d="M3 9.5 L6.5 13 L2 14Z" fill="#c9c9c9"/>
  <rect x=".3" y="14" width="17.4" height="3.7" rx=".8" fill="#f7f7f7" stroke="#e0e0e0" stroke-width=".6"/>
</svg>
<div class="dd ddg" style="left:1252.5px;top:122px;border-left-width:3px;border-right-width:3px;border-top-width:4px"></div>


<!-- THUMBNAILS -->
<!-- scrollbar -->
<div class="a" style="left:147px;top:146px;width:3px;height:564px;background:#d3d6da"></div>
<div class="a" style="left:139px;top:148px;width:8px;height:166px;border-radius:4px;background:#a5a8ad"></div>
<div class="num" style="top:156.5px">1</div>
<div class="num" style="top:238.5px">2</div>
<div class="num" style="top:320.5px">3</div>
<div class="num" style="top:402.5px">4</div>
<div class="num" style="top:484.5px">5</div>
<div class="num" style="top:566.5px">6</div>
<div class="num" style="top:648.5px">7</div>
<div class="a" style="left:28px;top:152px;width:91px;height:70px;border-radius:7px;border:3px solid #c3442a;background:#fff"></div>
<div class="thumb" style="top:238px"><svg style="left:0;top:0" width="83" height="62" viewBox="0 0 83 62"><path d="M68.0 49.5H71.0M71.9 49.5H76.0M76.9 49.5H80.4" stroke="#f0a840" stroke-width="0.8" opacity="0.9"/></svg></div>
<div class="thumb" style="top:320px"><svg style="left:0;top:0" width="83" height="62" viewBox="0 0 83 62"><circle cx="8.3" cy="21.9" r=".5" fill="#333"/><path d="M11.0 21.9H15.4M16.3 21.9H20.8M21.7 21.9H24.0M24.9 21.9H26.9M27.8 21.9H33.2M34.1 21.9H37.1M38.0 21.9H41.0M41.9 21.9H47.8M48.7 21.9H52.6M53.5 21.9H58.9M59.8 21.9H63.7M64.6 21.9H69.1M70.0 21.9H72.6M73.5 21.9H78.0" stroke="#111" stroke-width="1.5" opacity="0.5"/><path d="M11.0 24.75H16.5M17.4 24.75H21.5M22.4 24.75H27.3M28.2 24.75H32.9M33.8 24.75H36.1M37.0 24.75H42.0M42.9 24.75H47.3M48.2 24.75H51.4M52.3 24.75H54.4M55.3 24.75H60.8M61.7 24.75H65.6M66.5 24.75H71.3M72.2 24.75H77.7" stroke="#111" stroke-width="1.5" opacity="0.5"/><path d="M11.0 29H15.9M16.8 29H22.4M23.3 29H26.9M27.8 29H33.0M33.9 29H37.7M38.6 29H44.3M45.2 29H50.8M51.7 29H54.1M55.0 29H57.5M58.4 29H61.3M62.2 29H68.0M68.9 29H72.7M73.6 29H78.0" stroke="#111" stroke-width="1.5" opacity="0.5"/><path d="M11.0 33H14.2M15.1 33H19.1M20.0 33H23.6M24.5 33H27.9M28.8 33H33.1M34.0 33H37.0" stroke="#111" stroke-width="1.5" opacity="0.5"/><circle cx="8.3" cy="40" r=".5" fill="#333"/><path d="M11.0 40H16.6M17.5 40H22.2M23.1 40H28.9M29.8 40H35.2M36.1 40H42.1M43.0 40H47.6M48.5 40H51.2M52.1 40H57.5M58.4 40H64.3M65.2 40H70.8M71.7 40H76.0M76.9 40H78.0" stroke="#111" stroke-width="1.5" opacity="0.5"/><path d="M11.0 43H13.8M14.7 43H20.1M21.0 43H25.3M26.2 43H29.3M30.2 43H32.5M33.4 43H38.8M39.7 43H42.0" stroke="#111" stroke-width="1.5" opacity="0.5"/></svg></div>
<div class="thumb" style="top:402px"><svg style="left:0;top:0" width="83" height="62" viewBox="0 0 83 62"><path d="M8 7v3.5" stroke="#2aa6b8" stroke-width="1"/><path d="M20.5 5H22.9M23.8 5H29.0M29.9 5H33.5M34.4 5H37.0M37.9 5H41.1M42.0 5H47.1M48.0 5H53.4M54.3 5H56.5M57.4 5H61.9M62.8 5H65.0M65.9 5H69.0" stroke="#3b9bd8" stroke-width="0.75" opacity="0.8"/><path d="M14.0 8.5H17.3M18.2 8.5H23.7M24.6 8.5H30.6M31.5 8.5H35.5M36.4 8.5H42.4M43.3 8.5H46.5M47.4 8.5H49.7M50.6 8.5H55.0M55.9 8.5H58.1M59.0 8.5H61.7M62.6 8.5H66.3M67.2 8.5H71.6M72.5 8.5H75.1M76.0 8.5H78.2" stroke="#3b9bd8" stroke-width="0.75" opacity="0.8"/><path d="M22.0 12H27.5M28.4 12H31.6M32.5 12H38.4M39.3 12H44.8M45.7 12H49.3M50.2 12H54.0M54.9 12H59.0M59.9 12H64.5M65.4 12H69.7" stroke="#3b9bd8" stroke-width="0.75" opacity="0.8"/><path d="M5.0 19H9.2M10.1 19H14.6M15.5 19H21.3" stroke="#f0a040" stroke-width="0.75" opacity="0.85"/><path d="M23.0 19H27.0M27.9 19H31.7M32.6 19H37.4M38.3 19H41.3M42.2 19H45.4M46.3 19H52.2M53.1 19H57.2M58.1 19H62.3M63.2 19H65.2M66.1 19H69.8M70.7 19H75.0M75.9 19H78.0M78.9 19H79.0" stroke="#333" stroke-width="0.55" opacity="0.45"/><path d="M5.0 22H9.5M10.4 22H12.7M13.6 22H18.1M19.0 22H22.8M23.7 22H28.5M29.4 22H32.8M33.7 22H38.5M39.4 22H44.4M45.3 22H47.3M48.2 22H50.5M51.4 22H56.1M57.0 22H62.8M63.7 22H66.7M67.6 22H71.5M72.4 22H76.7M77.6 22H79.0" stroke="#333" stroke-width="0.55" opacity="0.45"/><path d="M5.0 25H8.5M9.4 25H12.6M13.5 25H17.0M17.9 25H20.0" stroke="#333" stroke-width="0.55" opacity="0.45"/><circle cx="5.5" cy="28" r=".4" fill="#333"/><path d="M8.0 28H11.2M12.1 28H15.6M16.5 28H21.6M22.5 28H24.6M25.5 28H29.8M30.7 28H35.6M36.5 28H39.8M40.7 28H43.6M44.5 28H49.7M50.6 28H53.5M54.4 28H57.2M58.1 28H61.8M62.7 28H67.5M68.4 28H70.8M71.7 28H75.0M75.9 28H76.0" stroke="#333" stroke-width="0.55" opacity="0.45"/><circle cx="5.5" cy="31" r=".4" fill="#333"/><path d="M8.0 31H13.3M14.2 31H18.0M18.9 31H24.3M25.2 31H27.9M28.8 31H32.1M33.0 31H37.6M38.5 31H44.1M45.0 31H48.8M49.7 31H52.6M53.5 31H56.0M56.9 31H61.0M61.9 31H64.6M65.5 31H70.8M71.7 31H77.0M77.9 31H79.0" stroke="#333" stroke-width="0.55" opacity="0.45"/></svg></div>
<div class="thumb" style="top:484px"><svg style="left:0;top:0" width="83" height="62" viewBox="0 0 83 62"><path d="M5.5 5.5v2.5" stroke="#3b9bd8" stroke-width="1"/><path d="M28.0 6.8H31.1M32.0 6.8H37.2M38.1 6.8H42.7M43.6 6.8H48.8M49.7 6.8H53.1M54.0 6.8H56.5M57.4 6.8H60.6M61.5 6.8H66.0" stroke="#3b9bd8" stroke-width="0.7" opacity="0.8"/><path d="M5.0 14H8.1M9.0 14H12.4M13.3 14H16.9M17.8 14H21.5M22.4 14H26.1M27.0 14H32.6M33.5 14H36.2M37.1 14H39.1M40.0 14H45.8M46.7 14H52.2M53.1 14H59.0M59.9 14H63.7M64.6 14H70.4M71.3 14H77.0M77.9 14H80.0" stroke="#333" stroke-width="0.5" opacity="0.45"/><path d="M5.0 16.5H10.0M10.9 16.5H16.2M17.1 16.5H21.8M22.7 16.5H26.8M27.7 16.5H30.8M31.7 16.5H35.1M36.0 16.5H38.9M39.8 16.5H42.1M43.0 16.5H47.3M48.2 16.5H51.4M52.3 16.5H57.5M58.4 16.5H60.6M61.5 16.5H67.1M68.0 16.5H72.8M73.7 16.5H79.4" stroke="#333" stroke-width="0.5" opacity="0.45"/><path d="M5.0 19H10.6M11.5 19H17.1M18.0 19H20.0" stroke="#333" stroke-width="0.5" opacity="0.45"/><path d="M5.0 24.5H7.1M8.0 24.5H12.9M13.8 24.5H16.5M17.4 24.5H20.6M21.5 24.5H26.2M27.1 24.5H31.2M32.1 24.5H35.7M36.6 24.5H42.4M43.3 24.5H47.7M48.6 24.5H52.0M52.9 24.5H55.9M56.8 24.5H62.3M63.2 24.5H67.1M68.0 24.5H73.1M74.0 24.5H77.4M78.3 24.5H80.0" stroke="#333" stroke-width="0.5" opacity="0.45"/><path d="M5.0 27H9.1M10.0 27H15.3M16.2 27H18.9M19.8 27H25.0M25.9 27H31.5M32.4 27H37.7" stroke="#333" stroke-width="0.5" opacity="0.45"/><path d="M5.0 32.5H10.3M11.2 32.5H13.2M14.1 32.5H18.6M19.5 32.5H25.0" stroke="#f0a040" stroke-width="0.6" opacity="0.85"/><path d="M26.0 32.5H28.2M29.1 32.5H32.2M33.1 32.5H36.2M37.1 32.5H41.2M42.1 32.5H45.8M46.7 32.5H50.6M51.5 32.5H56.6M57.5 32.5H59.5M60.4 32.5H62.6M63.5 32.5H66.0M66.9 32.5H69.4M70.3 32.5H72.6M73.5 32.5H79.4" stroke="#333" stroke-width="0.5" opacity="0.45"/><path d="M5.0 35H10.4M11.3 35H13.7M14.6 35H18.6M19.5 35H22.7M23.6 35H26.9M27.8 35H31.2M32.1 35H36.7M37.6 35H41.9M42.8 35H46.3M47.2 35H49.9M50.8 35H54.2M55.1 35H57.5M58.4 35H62.7M63.6 35H68.4M69.3 35H72.9M73.8 35H76.1M77.0 35H79.7" stroke="#333" stroke-width="0.5" opacity="0.45"/><path d="M5.0 37.5H8.5M9.4 37.5H13.8M14.7 37.5H19.8M20.7 37.5H24.3M25.2 37.5H30.4M31.3 37.5H35.8M36.7 37.5H40.4M41.3 37.5H44.8M45.7 37.5H49.7M50.6 37.5H55.4M56.3 37.5H60.0M60.9 37.5H65.6M66.5 37.5H70.4M71.3 37.5H74.3M75.2 37.5H79.3" stroke="#333" stroke-width="0.5" opacity="0.45"/><path d="M5.0 40H9.8M10.7 40H13.0M13.9 40H17.6M18.5 40H22.2M23.1 40H28.6M29.5 40H35.2M36.1 40H39.6M40.5 40H46.1M47.0 40H52.0" stroke="#333" stroke-width="0.5" opacity="0.45"/><path d="M5.0 45.5H8.0M8.9 45.5H12.8M13.7 45.5H16.2M17.1 45.5H22.4M23.3 45.5H27.9M28.8 45.5H34.3M35.2 45.5H40.4M41.3 45.5H46.0M46.9 45.5H51.8M52.7 45.5H57.0M57.9 45.5H60.3M61.2 45.5H65.5M66.4 45.5H68.5M69.4 45.5H71.9M72.8 45.5H77.9M78.8 45.5H80.0" stroke="#333" stroke-width="0.5" opacity="0.45"/><path d="M5.0 48H7.4M8.3 48H10.7M11.6 48H17.1M18.0 48H20.7M21.6 48H23.7M24.6 48H30.0M30.9 48H33.3M34.2 48H39.6M40.5 48H45.2M46.1 48H51.5" stroke="#333" stroke-width="0.5" opacity="0.45"/></svg></div>
<div class="thumb" style="top:566px"><svg style="left:0;top:0" width="83" height="62" viewBox="0 0 83 62"><path d="M5.5 5v2.5" stroke="#3b9bd8" stroke-width="1"/><path d="M32.0 6.2H37.8M38.7 6.2H43.0M43.9 6.2H49.1M50.0 6.2H52.2M53.1 6.2H58.1M59.0 6.2H60.0" stroke="#3b9bd8" stroke-width="0.7" opacity="0.8"/><path d="M5.0 16H9.9M10.8 16H13.2M14.1 16H19.1M20.0 16H25.7M26.6 16H28.9M29.8 16H33.1M34.0 16H38.2M39.1 16H44.4M45.3 16H48.3M49.2 16H51.9M52.8 16H55.8M56.7 16H61.2M62.1 16H67.1M68.0 16H71.6M72.5 16H75.9M76.8 16H80.0" stroke="#333" stroke-width="0.5" opacity="0.45"/><path d="M5.0 18.5H8.4M9.3 18.5H13.0M13.9 18.5H16.2M17.1 18.5H21.1" stroke="#333" stroke-width="0.5" opacity="0.45"/><circle cx="6" cy="22.5" r=".35" fill="#333"/><path d="M8.0 22.5H13.9M14.8 22.5H18.4M19.3 22.5H24.3M25.2 22.5H27.9M28.8 22.5H33.5M34.4 22.5H39.5M40.4 22.5H45.1M46.0 22.5H50.0M50.9 22.5H54.9M55.8 22.5H60.3M61.2 22.5H66.8M67.7 22.5H70.3M71.2 22.5H73.6M74.5 22.5H79.5" stroke="#333" stroke-width="0.45" opacity="0.42"/><circle cx="6" cy="25" r=".35" fill="#333"/><path d="M8.0 25H13.7M14.6 25H18.6M19.5 25H23.3M24.2 25H29.1M30.0 25H32.7M33.6 25H36.7M37.6 25H40.4M41.3 25H45.6M46.5 25H49.8M50.7 25H53.6M54.5 25H59.3M60.2 25H66.0M66.9 25H70.1M71.0 25H75.8M76.7 25H80.0" stroke="#333" stroke-width="0.45" opacity="0.42"/><circle cx="6" cy="27.5" r=".35" fill="#333"/><path d="M8.0 27.5H13.4M14.3 27.5H18.7M19.6 27.5H22.6M23.5 27.5H26.4M27.3 27.5H29.4M30.3 27.5H34.2M35.1 27.5H38.6M39.5 27.5H42.2M43.1 27.5H46.6M47.5 27.5H50.8M51.7 27.5H56.7M57.6 27.5H60.2M61.1 27.5H67.1M68.0 27.5H71.9M72.8 27.5H77.2M78.1 27.5H80.0" stroke="#333" stroke-width="0.45" opacity="0.42"/><path d="M8.0 30H12.2M13.1 30H17.1M18.0 30H22.8M23.7 30H29.2M30.1 30H33.7M34.6 30H39.5M40.4 30H46.2M47.1 30H50.0" stroke="#333" stroke-width="0.45" opacity="0.42"/><circle cx="6" cy="32.5" r=".35" fill="#333"/><path d="M8.0 32.5H10.9M11.8 32.5H14.8M15.7 32.5H20.5M21.4 32.5H26.1M27.0 32.5H32.9M33.8 32.5H39.2M40.1 32.5H43.0M43.9 32.5H46.7M47.6 32.5H50.6M51.5 32.5H54.3M55.2 32.5H60.0M60.9 32.5H66.3M67.2 32.5H72.8M73.7 32.5H76.8M77.7 32.5H80.0" stroke="#333" stroke-width="0.45" opacity="0.42"/><path d="M8.0 35H10.7M11.6 35H14.0M14.9 35H20.1M21.0 35H23.5M24.4 35H27.4M28.3 35H34.0M34.9 35H37.0M37.9 35H40.0" stroke="#333" stroke-width="0.45" opacity="0.42"/><circle cx="6" cy="37.5" r=".35" fill="#333"/><path d="M8.0 37.5H12.9M13.8 37.5H17.2M18.1 37.5H20.2M21.1 37.5H24.4M25.3 37.5H28.8M29.7 37.5H32.1M33.0 37.5H37.5M38.4 37.5H43.4M44.3 37.5H48.3M49.2 37.5H51.7M52.6 37.5H55.8M56.7 37.5H62.3M63.2 37.5H65.5M66.4 37.5H70.1M71.0 37.5H74.8M75.7 37.5H79.8" stroke="#333" stroke-width="0.45" opacity="0.42"/><circle cx="6" cy="40" r=".35" fill="#333"/><path d="M8.0 40H11.0M11.9 40H16.0M16.9 40H21.7M22.6 40H27.3M28.2 40H31.7M32.6 40H36.4M37.3 40H42.0M42.9 40H47.5M48.4 40H54.2M55.1 40H60.4M61.3 40H63.7M64.6 40H70.4M71.3 40H74.6M75.5 40H79.8" stroke="#333" stroke-width="0.45" opacity="0.42"/><circle cx="6" cy="42.5" r=".35" fill="#333"/><path d="M8.0 42.5H12.1M13.0 42.5H17.7M18.6 42.5H22.6M23.5 42.5H25.7M26.6 42.5H29.8M30.7 42.5H35.6M36.5 42.5H41.5M42.4 42.5H47.0M47.9 42.5H52.8M53.7 42.5H56.3M57.2 42.5H60.7M61.6 42.5H67.3M68.2 42.5H72.0M72.9 42.5H75.3M76.2 42.5H80.0" stroke="#333" stroke-width="0.45" opacity="0.42"/><circle cx="6" cy="45" r=".35" fill="#333"/><path d="M8.0 45H13.7M14.6 45H19.2M20.1 45H24.7M25.6 45H29.2M30.1 45H33.3M34.2 45H37.0M37.9 45H41.8M42.7 45H47.9M48.8 45H53.6M54.5 45H56.9M57.8 45H60.5M61.4 45H65.6M66.5 45H70.8M71.7 45H75.3M76.2 45H78.6M79.5 45H80.0" stroke="#333" stroke-width="0.45" opacity="0.42"/><path d="M8.0 47.5H13.5M14.4 47.5H16.6M17.5 47.5H21.5M22.4 47.5H25.4M26.3 47.5H28.0" stroke="#333" stroke-width="0.45" opacity="0.42"/><circle cx="6" cy="50" r=".35" fill="#333"/><path d="M8.0 50H11.4M12.3 50H15.6M16.5 50H20.2M21.1 50H25.2M26.1 50H31.2M32.1 50H35.5M36.4 50H41.8M42.7 50H45.2M46.1 50H49.1M50.0 50H52.4M53.3 50H55.8M56.7 50H61.8M62.7 50H67.6M68.5 50H71.3M72.2 50H74.9M75.8 50H79.5" stroke="#333" stroke-width="0.45" opacity="0.42"/><circle cx="6" cy="52.5" r=".35" fill="#333"/><path d="M8.0 52.5H13.0M13.9 52.5H19.1M20.0 52.5H25.0M25.9 52.5H30.3M31.2 52.5H33.8M34.7 52.5H38.3M39.2 52.5H42.0M42.9 52.5H47.0M47.9 52.5H52.1M53.0 52.5H55.8M56.7 52.5H59.7M60.6 52.5H65.8M66.7 52.5H68.8M69.7 52.5H74.9M75.8 52.5H80.0" stroke="#333" stroke-width="0.45" opacity="0.42"/><circle cx="6" cy="55" r=".35" fill="#333"/><path d="M8.0 55H11.3M12.2 55H17.8M18.7 55H21.9M22.8 55H26.8M27.7 55H31.8M32.7 55H37.6M38.5 55H40.0" stroke="#333" stroke-width="0.45" opacity="0.42"/></svg></div>
<div class="thumb" style="top:648px"><svg style="left:0;top:0" width="83" height="62" viewBox="0 0 83 62"><path d="M5.5 5v2.5" stroke="#3b9bd8" stroke-width="1"/><path d="M30.0 6.2H34.7M35.6 6.2H37.7M38.6 6.2H41.4M42.3 6.2H46.8M47.7 6.2H50.1M51.0 6.2H56.0M56.9 6.2H59.9M60.8 6.2H62.0" stroke="#3b9bd8" stroke-width="0.7" opacity="0.8"/><path d="M5.0 15.5H9.5M10.4 15.5H13.2M14.1 15.5H19.2M20.1 15.5H23.0M23.9 15.5H29.1M30.0 15.5H35.7M36.6 15.5H42.4M43.3 15.5H45.8M46.7 15.5H49.8M50.7 15.5H55.3M56.2 15.5H58.8M59.7 15.5H63.6M64.5 15.5H66.9M67.8 15.5H73.5M74.4 15.5H76.0" stroke="#333" stroke-width="0.5" opacity="0.45"/><circle cx="6" cy="21.5" r=".35" fill="#333"/><path d="M8.0 21.5H12.0M12.9 21.5H16.9M17.8 21.5H19.9M20.8 21.5H24.2M25.1 21.5H28.4M29.3 21.5H32.6M33.5 21.5H34.0" stroke="#333" stroke-width="0.45" opacity="0.42"/><circle cx="6" cy="24" r=".35" fill="#333"/><path d="M8.0 24H13.4M14.3 24H18.7M19.6 24H25.3M26.2 24H30.0" stroke="#333" stroke-width="0.45" opacity="0.42"/><circle cx="6" cy="26.5" r=".35" fill="#333"/><path d="M8.0 26.5H14.0M14.9 26.5H17.7M18.6 26.5H20.9M21.8 26.5H24.6M25.5 26.5H30.3M31.2 26.5H34.0M34.9 26.5H38.0" stroke="#333" stroke-width="0.45" opacity="0.42"/><circle cx="6" cy="29" r=".35" fill="#333"/><path d="M8.0 29H11.6M12.5 29H17.9M18.8 29H23.6M24.5 29H28.1M29.0 29H30.0" stroke="#333" stroke-width="0.45" opacity="0.42"/><circle cx="6" cy="31.5" r=".35" fill="#333"/><path d="M8.0 31.5H12.1M13.0 31.5H16.7M17.6 31.5H22.2M23.1 31.5H26.4M27.3 31.5H30.0" stroke="#333" stroke-width="0.45" opacity="0.42"/><circle cx="6" cy="34" r=".35" fill="#333"/><path d="M8.0 34H11.8M12.7 34H16.5M17.4 34H19.5M20.4 34H23.5M24.4 34H29.7M30.6 34H34.4M35.3 34H38.8M39.7 34H43.3" stroke="#333" stroke-width="0.45" opacity="0.42"/><circle cx="6" cy="36.5" r=".35" fill="#333"/><path d="M8.0 36.5H13.2M14.1 36.5H17.2M18.1 36.5H21.5M22.4 36.5H27.9M28.8 36.5H30.0" stroke="#333" stroke-width="0.45" opacity="0.42"/><circle cx="6" cy="39" r=".35" fill="#333"/><path d="M8.0 39H10.8M11.7 39H14.4M15.3 39H18.9M19.8 39H22.5M23.4 39H25.5M26.4 39H28.9M29.8 39H32.4M33.3 39H34.0" stroke="#333" stroke-width="0.45" opacity="0.42"/></svg></div>

<!-- SLIDE -->
<div class="a" style="left:397px;top:170px;width:640px;height:480px;background:#fff;box-shadow:0 0 0 .6px rgba(0,0,0,.07),0 1px 24px rgba(0,0,0,.075)"></div>
<div class="t" style="left:162px;top:686px;font-size:13px;color:#111">Haz clic para agregar notas</div>

<!-- STATUS -->
<div class="t st" style="left:24px">Diapositiva 1 de 23</div>
<div class="t st" style="left:153px">Español (Colombia)</div>
<div class="t st" style="left:301px">Accesibilidad: No disponible</div>
<div class="t st" style="left:743px">Notas</div>
<div class="t st" style="left:814px">Comentarios</div>
<div class="a" style="left:896px;top:711px;width:37px;height:22px;background:#a9a9a9"></div>
<div class="t st" style="left:1195px;font-size:13px">90%</div>
<svg style="left:282.5px;top:713.5px" width="16" height="16" viewBox="0 0 16 16">
  <g fill="none" stroke="#555" stroke-width=".95" stroke-linejoin="round">
    <circle cx="6.5" cy="3" r="2.1"/>
    <path d="M1 3.5 Q.2 5 2 5.5 L4 6.5 L3.5 10 L2.5 14 Q2.5 15 3.5 14.8 L6 11 L8.5 14.8 Q9.2 15 9.2 14"/>
    <path d="M12 3.5 Q12.8 5 11 5.5 L9 6.5 L9.2 8"/>
    <path d="M10.2 9.3 Q11 7.5 12.8 8 Q14.5 8.8 13.2 10.7 Q12.2 11.5 12.2 12.8"/>
  </g>
  <circle cx="12.2" cy="14.8" r=".8" fill="#555"/>
</svg>
<svg style="left:725px;top:715px" width="15" height="13" viewBox="0 0 15 13">
  <path d="M4.5 3.5 L7.5 .5 L10.5 3.5Z" fill="#666"/>
  <path d="M.5 5.5h14M.5 8.3h14M.5 11.1h14" stroke="#666" stroke-width="1.1"/>
</svg>
<svg style="left:796.5px;top:715.5px" width="14" height="14" viewBox="0 0 14 14">
  <path d="M0 0 H13.5 V9.5 H5.5 L2.5 13 V9.5 H0Z" fill="#5a5a5a"/>
</svg>
<svg style="left:906px;top:715px" width="17" height="14" viewBox="0 0 17 14">
  <rect x="1" y=".5" width="15" height="12.5" fill="#fff"/>
  <rect x="3.5" y="2.5" width="10" height="6" fill="none" stroke="#a9a9a9" stroke-width="1.2"/>
  <rect x="3.5" y="10" width="10" height="1.3" fill="#a9a9a9"/>
</svg>
<svg style="left:942.5px;top:716px" width="17" height="12" viewBox="0 0 17 12">
  <rect x=".5" y=".5" width="6.5" height="4.5" rx=".8" fill="#5a5a5a"/><rect x="9.5" y=".5" width="6.5" height="4.5" rx=".8" fill="#5a5a5a"/>
  <rect x=".5" y="7" width="6.5" height="4.5" rx=".8" fill="#5a5a5a"/><rect x="9.5" y="7" width="6.5" height="4.5" rx=".8" fill="#5a5a5a"/>
</svg>
<svg style="left:978.5px;top:714.5px" width="17" height="15" viewBox="0 0 17 15">
  <path d="M1 1.5 Q5 .5 8.5 2 Q12 .5 16 1.5 V13 Q12 12 8.5 13.5 Q5 12 1 13Z" fill="none" stroke="#5a5a5a" stroke-width="1"/>
  <path d="M8.5 2v11.5M3 4h3.5M3 6.5h3.5M3 9h3.5M10.5 4h3.5M10.5 6.5h3.5M10.5 9h3.5" stroke="#5a5a5a" stroke-width=".9"/>
</svg>
<svg style="left:1015px;top:715.5px" width="15" height="13" viewBox="0 0 15 13">
  <path d="M.5 1h14" stroke="#5a5a5a" stroke-width="1.4"/>
  <rect x="1.8" y="2" width="11.4" height="6.5" fill="none" stroke="#5a5a5a" stroke-width="1.1"/>
  <path d="M4.5 5h6M7.5 8.5V12M5 12.3h5" stroke="#5a5a5a" stroke-width="1"/>
</svg>
<div class="a" style="left:1047.5px;top:720px;width:8.5px;height:2.2px;background:#5a5a5a"></div>
<div class="a" style="left:1063px;top:720px;width:100px;height:4px;border-radius:2px;background:#939393"></div>
<div class="a" style="left:1099.5px;top:713px;width:16px;height:16px;border-radius:50%;background:#fafafa;box-shadow:0 0 0 .5px #b5b5b5,0 1px 1.5px rgba(0,0,0,.25)"></div>
<svg style="left:1169.5px;top:717px" width="9" height="9" viewBox="0 0 9 9"><path d="M4.5 0v9M0 4.5h9" stroke="#5a5a5a" stroke-width="2.1"/></svg>
<svg style="left:1242.5px;top:714.5px" width="14" height="14" viewBox="0 0 14 14">
  <rect x="1.1" y="1.1" width="12" height="11.8" rx="1" fill="none" stroke="#5f5f5f" stroke-width="1.1"/>
  <path d="M7.1 5.6V2.2M7.1 8.4v3.4M5.7 7H2.2M8.5 7H12" stroke="#5f5f5f" stroke-width=".9"/>
  <path d="M5.9 3.6 L7.1 2.1 L8.3 3.6Z M5.9 10.4 L7.1 11.9 L8.3 10.4Z M3.6 5.8 L2.1 7 L3.6 8.2Z M10.6 5.8 L12.1 7 L10.6 8.2Z" fill="#5f5f5f"/>
</svg>


<!-- DOCK -->
<div class="a" style="left:41px;top:734px;width:1198px;height:61px;background:rgba(92,102,116,.95);border-radius:14px;box-shadow:inset 0 0 0 1px rgba(140,150,160,.45)"></div>
<!-- Finder -->
<svg style="left:50px;top:743px" width="38" height="38" viewBox="0 0 38 38">
  <defs><clipPath id="c1"><rect width="37.5" height="37.5" rx="8.5"/></clipPath></defs>
  <g clip-path="url(#c1)">
    <rect width="38" height="38" fill="#e9eef2"/>
    <path d="M0 0 H22 Q16 10 16 21 H20 Q19.5 30 22 38 H0Z" fill="#2b9af0"/>
    <path d="M0 0 H22 Q16 10 16 21 H20 Q19.5 30 22 38 H0Z" fill="#1f7fe0" opacity=".3"/>
    <path d="M7 25.5 Q19 32 31 25.5" fill="none" stroke="#2a2f3a" stroke-width="1.3"/>
    <path d="M10 10v4M27.5 10v4" stroke="#2a2f3a" stroke-width="1.6"/>
  </g>
</svg>
<!-- Launchpad -->
<svg style="left:100px;top:743px" width="38" height="38" viewBox="0 0 38 38">
  <rect width="37.5" height="37.5" rx="8.5" fill="#c9ccd1"/>
  <rect x="6.5" y="6.5" width="6" height="5.5" rx="1.3" fill="#3bd05a"/><rect x="16" y="6.5" width="6" height="5.5" rx="1.3" fill="#ffcc1e"/><rect x="25.5" y="6.5" width="6" height="5.5" rx="1.3" fill="#f59a1d"/>
  <rect x="6.5" y="15.5" width="6" height="5.5" rx="1.3" fill="#d8321f"/><rect x="16" y="15.5" width="6" height="5.5" rx="1.3" fill="#aeb4bb"/><rect x="25.5" y="15.5" width="6" height="5.5" rx="1.3" fill="#f24058"/>
  <rect x="6.5" y="24.5" width="6" height="5.5" rx="1.3" fill="#9b4fd6"/><rect x="16" y="24.5" width="6" height="5.5" rx="1.3" fill="#1f9cf2"/><rect x="25.5" y="24.5" width="6" height="5.5" rx="1.3" fill="#32c0b0"/>
</svg>
<!-- Safari -->
<svg style="left:150px;top:743px" width="38" height="38" viewBox="0 0 38 38">
  <rect width="37.5" height="37.5" rx="8.5" fill="#f2f3f5"/>
  <circle cx="18.75" cy="18.75" r="15.5" fill="#1e8ff0"/>
  <circle cx="18.75" cy="18.75" r="13.5" fill="none" stroke="#fff" stroke-width="1.6" stroke-dasharray=".6 1.5" opacity=".85"/>
  <path d="M29 8.5 L21 21 L16.5 16.5Z" fill="#f04a3a"/>
  <path d="M8.5 29 L16.5 16.5 L21 21Z" fill="#f2f2f2"/>
</svg>
<!-- Messages -->
<svg style="left:200px;top:743px" width="38" height="38" viewBox="0 0 38 38">
  <defs><linearGradient id="gm" x1="0" y1="0" x2="0" y2="1"><stop offset="0" stop-color="#62e86e"/><stop offset="1" stop-color="#27c23f"/></linearGradient></defs>
  <rect width="37.5" height="37.5" rx="8.5" fill="url(#gm)"/>
  <ellipse cx="19" cy="18" rx="13" ry="10.5" fill="#f4fbf3"/>
  <path d="M9.5 24 Q10 30 7.5 31 Q13 31 15 27.5Z" fill="#f4fbf3"/>
</svg>
<!-- Mail -->
<svg style="left:250px;top:743px" width="38" height="38" viewBox="0 0 38 38">
  <defs><linearGradient id="gml" x1="0" y1="0" x2="0" y2="1"><stop offset="0" stop-color="#1b84f0"/><stop offset="1" stop-color="#1bc5fa"/></linearGradient></defs>
  <rect width="37.5" height="37.5" rx="8.5" fill="url(#gml)"/>
  <rect x="6" y="10.5" width="25.5" height="16.5" rx="1.2" fill="#f2f4f7"/>
  <path d="M6.5 11 L18.75 20.5 L31 11M6.5 26.5 L15 18.5M31 26.5 L22.5 18.5" fill="none" stroke="#a9b3c0" stroke-width=".8"/>
</svg>
<!-- Maps -->
<svg style="left:300px;top:743px" width="38" height="38" viewBox="0 0 38 38">
  <defs><clipPath id="c2"><rect width="37.5" height="37.5" rx="8.5"/></clipPath></defs>
  <g clip-path="url(#c2)">
    <rect width="38" height="38" fill="#e9f0e6"/>
    <path d="M22 0 H38 V30 L24 17Z" fill="#7fd67e"/>
    <circle cx="34" cy="6" r="8" fill="none" stroke="#d0d5d2" stroke-width="3"/>
    <path d="M0 15 L10 24 V38 H0Z" fill="#e7a0c9"/>
    <path d="M24 38 L30 31 L38 38Z" fill="#f8c22a"/>
    <path d="M10 0 h5 v38 h-5Z" fill="#f6f6f6"/>
    <path d="M10.5 0 h4 v18 h-4Z" fill="#2a87ea"/>
    <path d="M14 22 L38 35 V30 L15 18Z" fill="#f6f6f6"/>
    <circle cx="14" cy="22" r="6.5" fill="#fff"/>
    <circle cx="14" cy="22" r="5.2" fill="#2a87ea"/>
    <path d="M14 18 L17 25 L14 23.3 L11 25Z" fill="#fff"/>
  </g>
</svg>
<!-- Photos -->
<svg style="left:350px;top:743px" width="38" height="38" viewBox="0 0 38 38">
  <rect width="37.5" height="37.5" rx="8.5" fill="#fafafa"/>
  <g transform="translate(18.75 18.75)" opacity=".85">
    <ellipse cx="0" cy="-8.5" rx="4.2" ry="7" fill="#f5a623"/>
    <ellipse cx="0" cy="-8.5" rx="4.2" ry="7" fill="#f7c843" transform="rotate(45)"/>
    <ellipse cx="0" cy="-8.5" rx="4.2" ry="7" fill="#9dcf43" transform="rotate(90)"/>
    <ellipse cx="0" cy="-8.5" rx="4.2" ry="7" fill="#4fbf8f" transform="rotate(135)"/>
    <ellipse cx="0" cy="-8.5" rx="4.2" ry="7" fill="#4da3e8" transform="rotate(180)"/>
    <ellipse cx="0" cy="-8.5" rx="4.2" ry="7" fill="#8c7fe0" transform="rotate(225)"/>
    <ellipse cx="0" cy="-8.5" rx="4.2" ry="7" fill="#d77bcc" transform="rotate(270)"/>
    <ellipse cx="0" cy="-8.5" rx="4.2" ry="7" fill="#f0524c" transform="rotate(315)"/>
  </g>
</svg>
<!-- FaceTime -->
<svg style="left:400px;top:743px" width="38" height="38" viewBox="0 0 38 38">
  <defs><linearGradient id="gf" x1="0" y1="0" x2="0" y2="1"><stop offset="0" stop-color="#5ee86a"/><stop offset="1" stop-color="#27c23f"/></linearGradient></defs>
  <rect width="37.5" height="37.5" rx="8.5" fill="url(#gf)"/>
  <rect x="6.5" y="12" width="17" height="14" rx="3.5" fill="#f3faf2"/>
  <path d="M25 17 L31 12.5 V25.5 L25 21Z" fill="#f3faf2"/>
</svg>
<!-- Calendar -->
<svg style="left:450px;top:743px" width="38" height="38" viewBox="0 0 38 38">
  <defs><clipPath id="c3"><rect width="37.5" height="37.5" rx="8.5"/></clipPath></defs>
  <g clip-path="url(#c3)">
    <rect width="38" height="38" fill="#fbfbfb"/>
    <rect width="38" height="11" fill="#f04b4b"/>
  </g>
  <text x="18.75" y="8.8" text-anchor="middle" font-family="Liberation Sans" font-weight="700" font-size="7.2" fill="#fff">ABR.</text>
  <text x="18.75" y="32" text-anchor="middle" font-family="Liberation Sans" font-size="19" fill="#222">16</text>
</svg>
<!-- Contacts -->
<svg style="left:500px;top:743px" width="38" height="38" viewBox="0 0 38 38">
  <rect x="32" y="3" width="5" height="32" rx="2" fill="#aaa"/>
  <rect x="34" y="10" width="3" height="6" fill="#4aa0e8"/><rect x="34" y="17" width="3" height="6" fill="#f2a22e"/><rect x="34" y="24" width="3" height="6" fill="#55c060"/>
  <rect width="35" height="37.5" rx="8" fill="#b08a55"/>
  <circle cx="17.5" cy="18.5" r="11" fill="none" stroke="#9c7748" stroke-width="1.2"/>
  <circle cx="17.5" cy="15.5" r="3.8" fill="#97714a"/>
  <path d="M10.5 25.5 Q11 20.5 17.5 20.5 Q24 20.5 24.5 25.5" fill="#97714a"/>
</svg>
<!-- Reminders -->
<svg style="left:550px;top:743px" width="38" height="38" viewBox="0 0 38 38">
  <rect width="37.5" height="37.5" rx="8.5" fill="#fcfcfc"/>
  <circle cx="8" cy="9" r="2.6" fill="#2f7ff0" stroke="#c7dcf8" stroke-width="1"/>
  <circle cx="8" cy="18.5" r="2.6" fill="#e8443a" stroke="#f5c5c0" stroke-width="1"/>
  <circle cx="8" cy="28" r="2.6" fill="#f2a02a" stroke="#f8dcb5" stroke-width="1"/>
  <path d="M14 9h18M14 18.5h18M14 28h18" stroke="#d4d4d4" stroke-width=".9"/>
</svg>
<!-- Notes -->
<svg style="left:600px;top:743px" width="38" height="38" viewBox="0 0 38 38">
  <defs><clipPath id="c4"><rect width="37.5" height="37.5" rx="8.5"/></clipPath></defs>
  <g clip-path="url(#c4)">
    <rect width="38" height="38" fill="#f6f6f6"/>
    <rect width="38" height="9" fill="#fbc82d"/>
    <path d="M0 9.5h38" stroke="#e7b42a" stroke-width="1"/>
    <path d="M0 17.5h38M0 24.5h38M0 31.5h38" stroke="#dedede" stroke-width=".6"/>
  </g>
</svg>
<!-- Music -->
<svg style="left:648.5px;top:743px" width="38" height="38" viewBox="0 0 38 38">
  <defs><linearGradient id="gmu" x1="0" y1="0" x2="0" y2="1"><stop offset="0" stop-color="#fb5c74"/><stop offset="1" stop-color="#f83a4e"/></linearGradient></defs>
  <rect width="37.5" height="37.5" rx="8.5" fill="url(#gmu)"/>
  <path d="M14.5 26 V11 L27.5 8.5 V23" fill="none" stroke="#fff" stroke-width="2.2"/>
  <ellipse cx="11.8" cy="26.5" rx="3.5" ry="2.8" fill="#fff"/>
  <ellipse cx="24.8" cy="23.5" rx="3.5" ry="2.8" fill="#fff"/>
</svg>
<!-- App Store -->
<svg style="left:698.5px;top:743px" width="38" height="38" viewBox="0 0 38 38">
  <defs><linearGradient id="ga" x1="0" y1="0" x2="0" y2="1"><stop offset="0" stop-color="#1ab4f6"/><stop offset="1" stop-color="#1a6fe0"/></linearGradient></defs>
  <rect width="37.5" height="37.5" rx="8.5" fill="url(#ga)"/>
  <path d="M20.5 7.5 L11 27.5M17 7.5 L27.5 28M8 22.5 H30" stroke="#fff" stroke-width="2.3" stroke-linecap="round"/>
</svg>
<!-- Settings -->
<svg style="left:748.5px;top:743px" width="38" height="38" viewBox="0 0 38 38">
  <defs><linearGradient id="gs" x1="0" y1="0" x2="0" y2="1"><stop offset="0" stop-color="#d9dadc"/><stop offset="1" stop-color="#8e9095"/></linearGradient></defs>
  <rect width="37.5" height="37.5" rx="8.5" fill="url(#gs)"/>
  <circle cx="18.75" cy="18.75" r="15" fill="#505256"/>
  <circle cx="18.75" cy="18.75" r="13.5" fill="none" stroke="#8a8c90" stroke-width="1.5" stroke-dasharray="1 1.2"/>
  <circle cx="18.75" cy="18.75" r="10.5" fill="#6d6f73" stroke="#3d3f42" stroke-width="1.4"/>
  <circle cx="18.75" cy="18.75" r="6" fill="none" stroke="#3d3f42" stroke-width="1.3"/>
  <path d="M18.75 18.75 V8.5M18.75 18.75 L27.5 24M18.75 18.75 L10 24" stroke="#3d3f42" stroke-width="1.5"/>
</svg>
<div class="a" style="left:803px;top:742px;width:1px;height:45px;background:#13223a"></div>
<!-- WhatsApp -->
<svg style="left:821px;top:743px" width="38" height="38" viewBox="0 0 38 38">
  <defs><linearGradient id="gw" x1="0" y1="0" x2="0" y2="1"><stop offset="0" stop-color="#5fe46f"/><stop offset="1" stop-color="#22b83a"/></linearGradient></defs>
  <rect width="37.5" height="37.5" rx="8.5" fill="url(#gw)"/>
  <path d="M9 29.5 L10.8 24 A10.5 10.5 0 1 1 14.5 27.8Z" fill="none" stroke="#fff" stroke-width="2"/>
  <path d="M14.5 12.5 Q13 14 14 17 Q16 21.5 20.5 23.5 Q23.5 24.5 24.8 22.5 L23 20.5 L21 21.2 Q18 20 16.8 17 L17.8 15 Z" fill="#fff"/>
</svg>
<!-- Word -->
<svg style="left:871px;top:743px" width="38" height="38" viewBox="0 0 38 38">
  <rect width="37.5" height="37.5" rx="8.5" fill="#fcfcfc"/>
  <rect x="11" y="6" width="21" height="6.5" rx="1" fill="#41a5ee"/>
  <rect x="11" y="12.5" width="21" height="6.5" fill="#2b7cd3"/>
  <rect x="11" y="19" width="21" height="6.5" fill="#185abd"/>
  <rect x="11" y="25.5" width="21" height="6" rx="1" fill="#103f91"/>
  <rect x="5.5" y="11.5" width="14" height="14" rx="1.3" fill="#185abd"/>
  <text x="12.5" y="22.5" text-anchor="middle" font-family="Liberation Sans" font-weight="700" font-size="10" fill="#fff">W</text>
</svg>
<!-- Excel -->
<svg style="left:921px;top:743px" width="38" height="38" viewBox="0 0 38 38">
  <rect width="37.5" height="37.5" rx="8.5" fill="#fcfcfc"/>
  <rect x="11" y="6" width="21" height="26" rx="1.5" fill="#21a366"/>
  <rect x="21.5" y="6" width="10.5" height="6.5" fill="#33c481"/>
  <rect x="11" y="19" width="21" height="6.5" fill="#107c41"/>
  <rect x="11" y="25.5" width="21" height="6.5" rx="1" fill="#185c37"/>
  <rect x="5.5" y="11.5" width="14" height="14" rx="1.3" fill="#107c41"/>
  <text x="12.5" y="22.5" text-anchor="middle" font-family="Liberation Sans" font-weight="700" font-size="10" fill="#fff">X</text>
</svg>
<!-- Outlook -->
<svg style="left:971px;top:743px" width="38" height="38" viewBox="0 0 38 38">
  <rect width="37.5" height="37.5" rx="8.5" fill="#fcfcfc"/>
  <rect x="13" y="6" width="19" height="13" rx="1" fill="#0a64c8"/>
  <rect x="22" y="6" width="10" height="6.5" fill="#28a8ea"/>
  <path d="M11 18 L32 18 V31 Q32 32 31 32 H12 Q11 32 11 31Z" fill="#1490df"/>
  <path d="M11 20 L21.5 26 L32 20 V32 H11Z" fill="#28a8ea"/>
  <rect x="5.5" y="11.5" width="14" height="14" rx="1.3" fill="#0f6cbd"/>
  <text x="12.5" y="22.5" text-anchor="middle" font-family="Liberation Sans" font-weight="700" font-size="10" fill="#fff">O</text>
</svg>
<!-- PowerPoint -->
<svg style="left:1021px;top:743px" width="38" height="38" viewBox="0 0 38 38">
  <rect width="37.5" height="37.5" rx="8.5" fill="#fcfcfc"/>
  <circle cx="21" cy="19" r="12.5" fill="#ed6c47"/>
  <path d="M21 6.5 A12.5 12.5 0 0 1 33.5 19 H21Z" fill="#ff8f6b"/>
  <path d="M8.5 19 A12.5 12.5 0 0 0 33.5 19Z" fill="#c43e1c"/>
  <rect x="5.5" y="11.5" width="14" height="14" rx="1.3" fill="#c43e1c"/>
  <text x="12.5" y="22.5" text-anchor="middle" font-family="Liberation Sans" font-weight="700" font-size="10" fill="#fff">P</text>
</svg>
<div class="a" style="left:1075.5px;top:742px;width:1px;height:45px;background:#13223a"></div>
<!-- Folder -->
<svg style="left:1091px;top:741px" width="40" height="42" viewBox="0 0 40 42">
  <path d="M6 8 L16 2 L34 6 L32 14Z" fill="#f0c95a"/>
  <path d="M9 9 L24 4 L36 10 L30 14Z" fill="#e9dfb8"/>
  <path d="M12 10 h16 v6 h-16z" fill="#8fd08a"/>
  <path d="M1 10 Q1 8.5 2.5 8.5 H13 L15.5 11 H37.5 Q39 11 39 12.5 V37 Q39 39 37 39 H3 Q1 39 1 37Z" fill="#5bb5ee"/>
  <path d="M1 14 H39 V37 Q39 39 37 39 H3 Q1 39 1 37Z" fill="#75c8f7"/>
  <path d="M1 38 H39" stroke="#3d93d0" stroke-width="1.5"/>
</svg>
<!-- Safari window preview -->
<svg style="left:1138px;top:751px" width="46" height="34" viewBox="0 0 46 34">
  <rect x=".5" y=".5" width="44" height="23" fill="#fff" stroke="#ccc" stroke-width=".6"/>
  <rect x=".5" y=".5" width="44" height="2" fill="#e8e8e8"/>
  <rect x="3" y="5" width="26" height="14" fill="#f4f4f4" stroke="#e0e0e0" stroke-width=".4"/>
  <path d="M31 6h8M31 9h6" stroke="#999" stroke-width=".5"/><rect x="31" y="11" width="5" height="1.5" fill="#7aa8e0"/>
  <path d="M3 20.5h6" stroke="#999" stroke-width=".5"/><rect x="3" y="21.5" width="5" height="1" fill="#5a8ad0"/>
  <rect x="31" y="19" width="15" height="15" rx="3.5" fill="#f0f0f0"/>
  <circle cx="38.5" cy="26.5" r="5.8" fill="#1e8ff0"/>
  <path d="M42 23 L39.3 27.3 L37.7 25.7Z" fill="#f04a3a"/><path d="M35 30 L37.7 25.7 L39.3 27.3Z" fill="#fff"/>
</svg>
<!-- Trash -->
<svg style="left:1193px;top:740px" width="36" height="44" viewBox="0 0 36 44">
  <defs><linearGradient id="gt" x1="0" y1="0" x2="1" y2="0"><stop offset="0" stop-color="#cfd0d3"/><stop offset=".5" stop-color="#f0f0f2"/><stop offset="1" stop-color="#c8c9cc"/></linearGradient></defs>
  <path d="M2 7 Q18 3 34 7 L30 41 Q18 43.5 6 41Z" fill="url(#gt)"/>
  <ellipse cx="18" cy="7" rx="16" ry="3.5" fill="#dcdde0"/>
  <path d="M6 6 L10 3 L14 6M15 5 L20 1.5 L25 5.5M23 6 L28 3 L31 6.5" stroke="#555" stroke-width="1.6" fill="none"/>
  <path d="M12 5 l3 -2M22 4 l3 1" stroke="#3a8ee0" stroke-width="1.3"/><path d="M17 6 l2 -2" stroke="#47b05a" stroke-width="1.2"/><path d="M25 7 l3 -2" stroke="#d04a3a" stroke-width="1.2"/>
</svg>
<!-- dots -->
<div class="dot" style="left:67px"></div>
<div class="dot" style="left:167px"></div>
<div class="dot" style="left:838px"></div>
<div class="dot" style="left:888px"></div>
<div class="dot" style="left:938px"></div>
<div class="dot" style="left:988px"></div>
<div class="dot" style="left:1038px"></div>


</div></body></html>
